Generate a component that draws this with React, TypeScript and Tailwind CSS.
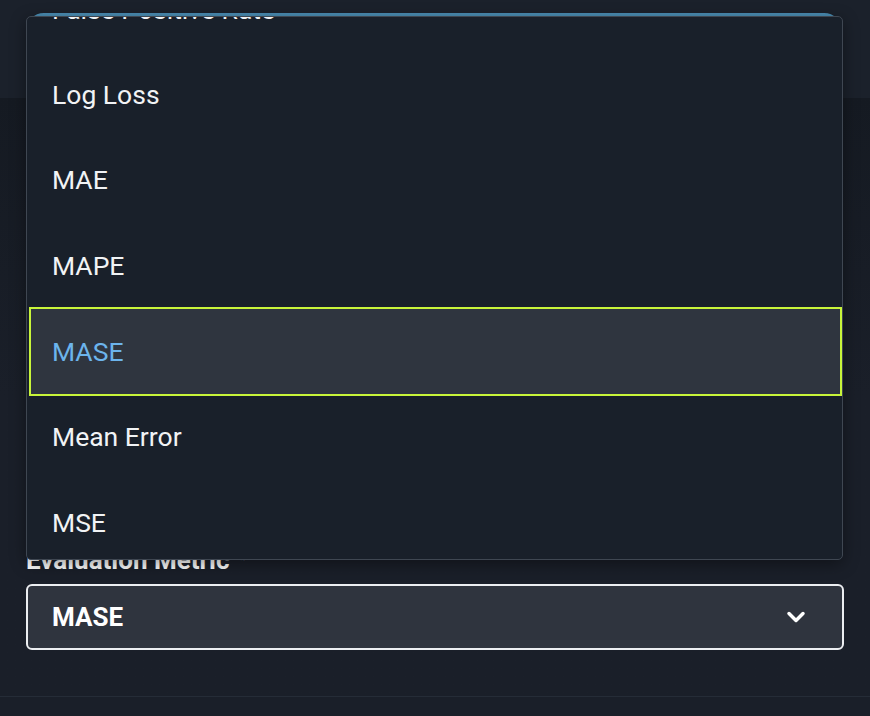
import React from "react";
import { ChevronDown } from "lucide-react";

const items = ["False Positive Rate", "Log Loss", "MAE", "MAPE", "MASE", "Mean Error", "MSE"];

export default function App() {
  return (
    <div className="relative w-[870px] h-[716px] overflow-hidden bg-[#1a1f29] font-['Roboto',sans-serif] text-white">
      {/* header area */}
      <div className="relative h-[98px] bg-[#1b212b]">
        <div className="absolute left-[26px] top-[13px] w-[816px] h-[60px] rounded-[18px] border-[3px] border-[#4a8db3]" />
      </div>
      {/* body */}
      <div className="relative h-[599px] flex flex-col px-[26px] pt-[446px] border-b border-[#252c37] bg-gradient-to-b from-[#151a22] via-[#1a1f29] to-[#1a1f29]">
        <div className="h-[32px] leading-[32px] text-[26px] font-bold text-white flex items-center gap-[10px]">
          <span>Evaluation Metric</span>
          <span className="text-[14px] text-gray-400">*</span>
        </div>
        <div className="mt-[8px] h-[66px] rounded-[6px] border-2 border-[#eceef1] bg-[#2f343e] flex items-center justify-between pl-[24px] pr-[32px]">
          <span className="text-[26px] font-bold">MASE</span>
          <ChevronDown size={28} strokeWidth={3} className="text-white" />
        </div>
      </div>
      <div className="h-[18px]" />

      {/* dropdown overlay */}
      <div className="absolute left-[26px] top-[16px] w-[817px] h-[544px] rounded-[5px] border border-[#3f4752] bg-[#19202a] overflow-hidden shadow-[0_4px_16px_rgba(0,0,0,0.4)]">
        <div className="mt-[-51px] flex flex-col">
          {items.map((it, i) => {
            const active = it === "MASE";
            return (
              <div
                key={it}
                className={
                  active
                    ? "h-[85.7px] flex items-center pl-[21px] ml-[4px] mr-[2px] bg-[#2f353f] outline outline-2 outline-[#c8f53a] text-[26.5px] text-[#6cb4ec]"
                    : i === 0
                    ? "h-[85.7px] flex items-center pl-[25px] pt-[2px] text-[26.5px] text-[#f1f3f5]"
                    : "h-[85.7px] flex items-center pl-[25px] text-[26.5px] text-[#f1f3f5]"
                }
              >
                {it}
              </div>
            );
          })}
        </div>
      </div>
    </div>
  );
}
